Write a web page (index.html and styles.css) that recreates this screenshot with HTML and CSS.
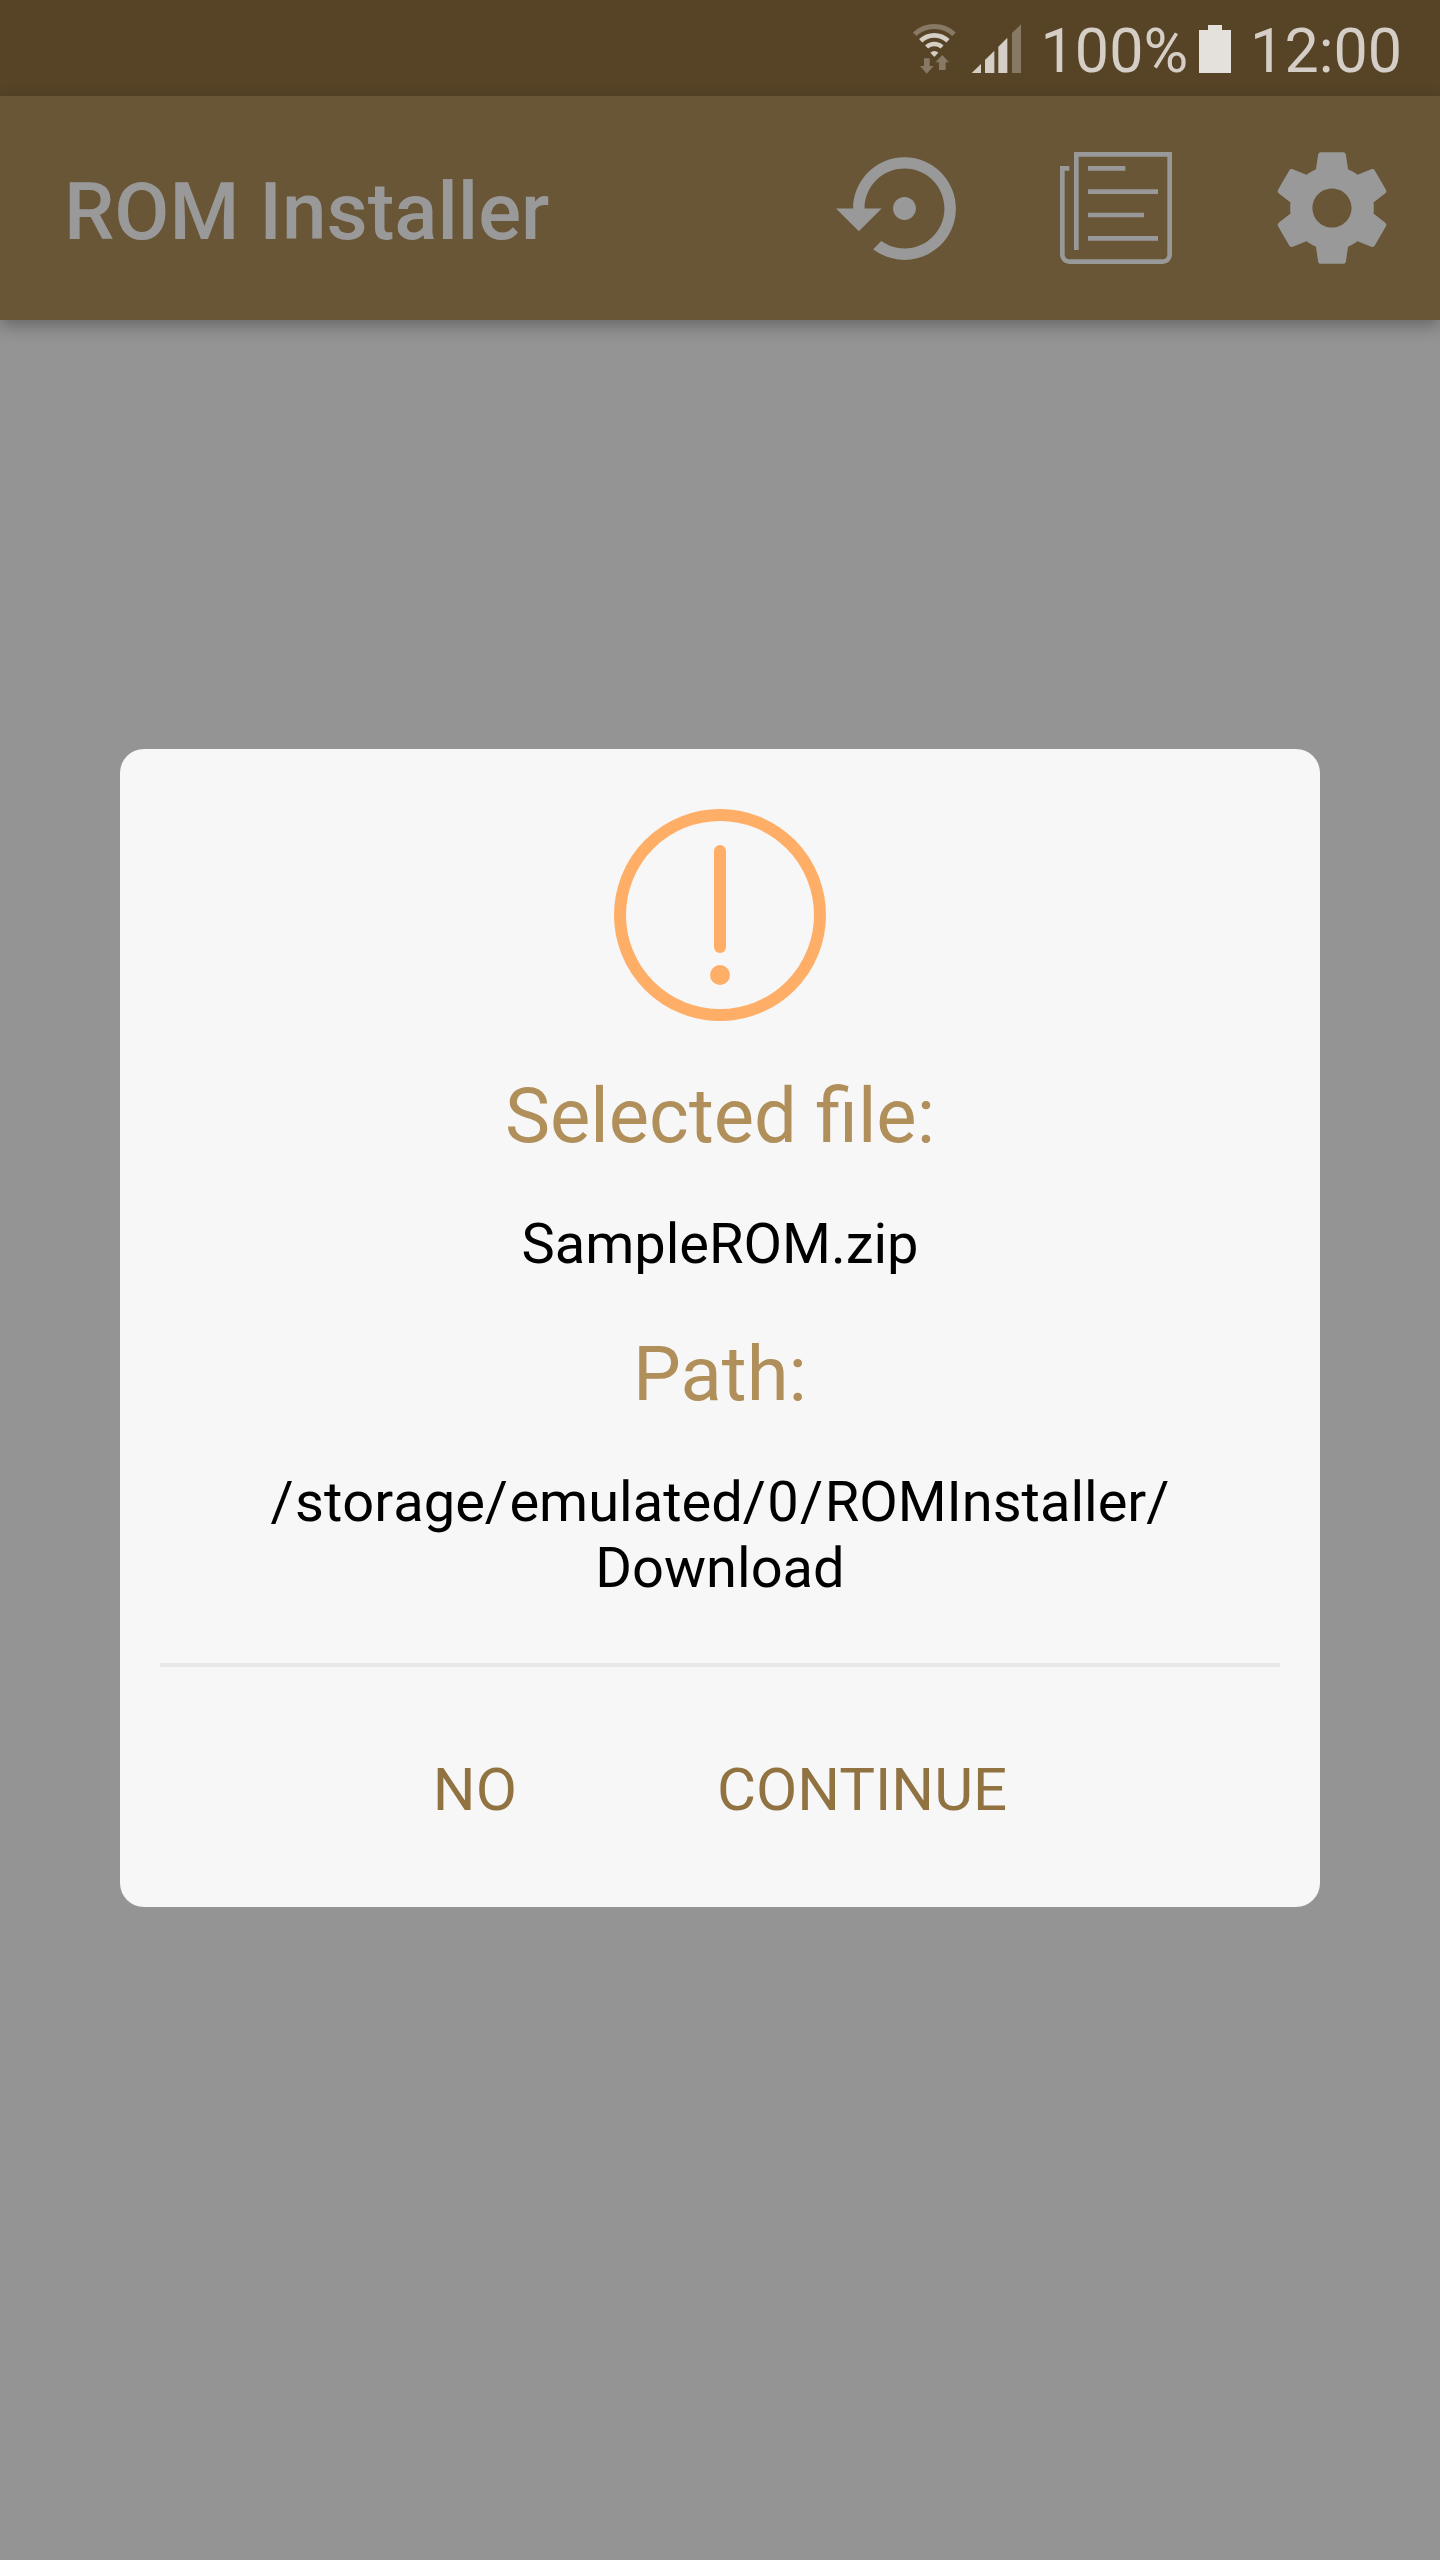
FILE: index.html
```html
<!DOCTYPE html>
<html lang="en">
<head>
<meta charset="utf-8">
<title>ROM Installer</title>
<link rel="stylesheet" href="styles.css">
</head>
<body>
<div class="screen">
  <div class="status-bar">
    <svg class="signals" viewBox="36 60 336 168">
      <g fill="none" stroke="#d5cec6">
        <path class="dim-stroke" stroke-width="15" d="M44 102.8A86.5 86.5 0 0 1 162 102.8"/>
        <path stroke-width="14" d="M62 122.1A60 60 0 0 1 144 122.1"/>
        <path stroke-width="13" d="M79.8 141.1A34 34 0 0 1 126.2 141.1"/>
      </g>
      <path class="lit" d="M103 171L91 158A17 17 0 0 1 115 158Z"/>
      <path class="dim" d="M72 175h17v23h12l-21 23l-20-23h12zM127 165l20 22h-10v23h-20v-23h-11z"/>
      <path class="lit" d="M215 219L243 192V219zM255 219V180L283 152V219zM295 219V140L322 113V219z"/>
      <path class="dim" d="M336 219V99L363 73V219z"/>
    </svg>
    <span class="percent">100%</span>
    <svg class="battery" viewBox="0 0 32 48"><path d="M9 0h14v5h9v43H0V5h9z"/></svg>
    <span class="clock">12:00</span>
  </div>
  <header class="app-bar">
    <h1 class="title">ROM Installer</h1>
    <svg class="icon restore" viewBox="0 0 24 24"><path d="M14 12c0-1.1-.9-2-2-2s-2 .9-2 2 .9 2 2 2 2-.9 2-2zm-2-9c-4.97 0-9 4.03-9 9H0l4 4 4-4H5c0-3.87 3.13-7 7-7s7 3.13 7 7-3.13 7-7 7c-1.51 0-2.91-.49-4.06-1.3l-1.42 1.44C8.04 20.3 9.94 21 12 21c4.97 0 9-4.03 9-9s-4.03-9-9-9z"/></svg>
    <svg class="icon news" viewBox="0 0 24 24"><path fill="none" stroke="#999" d="M3.5 21V.5H23.5V22a1.5 1.5 0 0 1-1.5 1.5H2A1.5 1.5 0 0 1 .5 22V3.5H2M6 3.5h8M6 8.5h15M6 13.5h12M6 18.5h15"/></svg>
    <svg class="icon gear" viewBox="0 0 24 24"><path d="M19.43 12.98c.04-.32.07-.64.07-.98s-.03-.66-.07-.98l2.11-1.65c.19-.15.24-.42.12-.64l-2-3.46c-.12-.22-.39-.3-.61-.22l-2.49 1c-.52-.4-1.08-.73-1.69-.98l-.38-2.65C14.46 2.18 14.25 2 14 2h-4c-.25 0-.46.18-.49.42l-.38 2.65c-.61.25-1.17.59-1.69.98l-2.49-1c-.23-.09-.49 0-.61.22l-2 3.46c-.13.22-.07.49.12.64l2.11 1.65c-.04.32-.07.65-.07.98s.03.66.07.98l-2.11 1.65c-.19.15-.24.42-.12.64l2 3.46c.12.22.39.3.61.22l2.49-1c.52.4 1.08.73 1.69.98l.38 2.65c.03.24.24.42.49.42h4c.25 0 .46-.18.49-.42l.38-2.65c.61-.25 1.17-.59 1.69-.98l2.49 1c.23.09.49 0 .61-.22l2-3.46c.12-.22.07-.49-.12-.64l-2.11-1.65zM12 15.5c-1.93 0-3.5-1.57-3.5-3.5s1.57-3.5 3.5-3.5 3.5 1.57 3.5 3.5-1.57 3.5-3.5 3.5z"/></svg>
  </header>
  <main class="content">
    <section class="dialog">
      <svg class="warning" viewBox="0 0 212 212">
        <circle cx="106" cy="106" r="100"/>
        <path d="M106 42V138"/>
        <circle class="dot" cx="106" cy="166" r="10"/>
      </svg>
      <h2 class="label">Selected file:</h2>
      <p class="value">SampleROM.zip</p>
      <h2 class="label">Path:</h2>
      <p class="value path"><span class="sep">/</span>storage<span class="sep">/</span>emulated<span class="sep">/0/</span>ROMInstaller/<br>Download</p>
      <div class="actions">
        <button class="action">NO</button>
        <button class="action">CONTINUE</button>
      </div>
    </section>
  </main>
</div>
</body>
</html>
```

FILE: styles.css
```css
* { box-sizing: border-box; }

body {
  margin: 0;
  font-family: Roboto, sans-serif;
}

.screen {
  display: flex;
  flex-direction: column;
  width: 1440px;
  height: 2560px;
  background: #949494;
  overflow: hidden;
}

.status-bar {
  display: flex;
  flex: none;
  justify-content: flex-end;
  height: 96px;
  padding-right: 38px;
  background: #574427;
  color: #d5cec6;
  font-size: 61px;
  line-height: 102px;
}

.signals {
  width: 112px;
  height: 56px;
  margin: 20px 17px 0 0;
}

.lit { fill: #d5cec6; }
.dim { fill: #887965; }
.dim-stroke { stroke: #887965; }

.battery {
  width: 32px;
  height: 48px;
  margin: 25px 19px 0 11px;
  fill: #e4e0db;
}

.app-bar {
  display: flex;
  flex: none;
  align-items: center;
  height: 224px;
  padding: 0 41px 0 64px;
  background: #695637;
  box-shadow: 0 6px 16px rgba(0, 0, 0, 0.3);
}

.title {
  margin: 8px auto 0 0;
  color: #999;
  font-size: 80px;
  font-weight: 500;
  line-height: 94px;
}

.icon {
  flex: none;
  fill: #999;
}

.restore { width: 137px; height: 137px; margin-right: 87px; }
.news { width: 112px; height: 112px; margin-right: 93px; }
.gear { width: 134px; height: 134px; }

.content {
  display: flex;
  flex: 1;
  align-items: flex-start;
  justify-content: center;
  padding-top: 429px;
}

.dialog {
  display: flex;
  flex-direction: column;
  align-items: center;
  width: 1200px;
  height: 1158px;
  padding: 60px 40px 0;
  border-radius: 24px;
  background: #f7f7f7;
  text-align: center;
}

.warning {
  width: 212px;
  height: 212px;
  margin-bottom: 50px;
  fill: none;
  stroke: #ffae68;
  stroke-width: 12;
  stroke-linecap: round;
}

.warning .dot { fill: #ffae68; stroke: none; }

.label {
  margin: 0;
  color: #b08f5b;
  font-size: 76px;
  font-weight: 400;
  line-height: 90px;
}

.value {
  margin: 50px 0 52px;
  color: #000;
  font-size: 56px;
  line-height: 66px;
}

.path {
  margin-bottom: 62px;
  font-kerning: none;
}

.sep { letter-spacing: 1.4px; }

.actions {
  display: flex;
  justify-content: center;
  gap: 200px;
  width: 1120px;
  border-top: 4px solid #e8e8e8;
  padding-top: 87px;
}

.action {
  padding: 0;
  border: 0;
  background: none;
  color: #917342;
  font: 400 60px/72px Roboto, sans-serif;
}
```
